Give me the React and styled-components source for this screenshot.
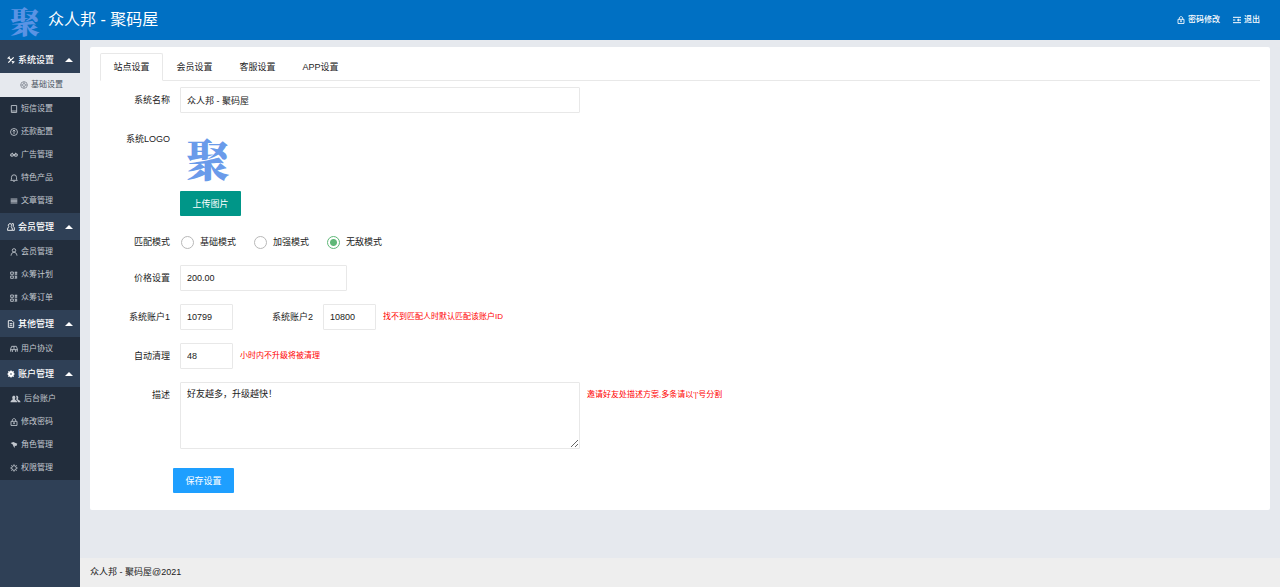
import React, { useState } from "react";
import styled, { createGlobalStyle, css } from "styled-components";

const GlobalStyle = createGlobalStyle`
  *, *::before, *::after { box-sizing: border-box; }
  body {
    margin: 0;
    background: #e6e9ee;
    color: #222;
    font-family: "Liberation Sans", "Noto Sans CJK SC", sans-serif;
    font-size: 9px;
    line-height: 14px;
  }
  input, textarea, button { font: inherit; color: inherit; }
  ul { margin: 0; padding: 0; list-style: none; }
  a { color: inherit; text-decoration: none; }
`;

const Page = styled.div`
  min-height: 100vh;
  display: grid;
  grid-template: 40px 1fr / 80px minmax(0, 1fr);
`;

const Header = styled.header`
  grid-column: 1 / -1;
  display: flex;
  align-items: center;
  justify-content: space-between;
  padding: 0 20px 0 10px;
  background: #0070c3;
  color: #fff;
`;

const Brand = styled.a`
  display: flex;
  align-items: center;
  gap: 8px;
`;

const BrandName = styled.h1`
  margin: 0;
  font-size: 16px;
  font-weight: 400;
  line-height: 24px;
`;

const Mark = styled.span`
  display: block;
  color: ${(p) => (p.$large ? "#6a9bea" : "#5a93e4")};
  font-family: "Noto Serif CJK SC", "Noto Sans CJK SC", serif;
  font-size: ${(p) => (p.$large ? 44 : 30)}px;
  line-height: ${(p) => (p.$large ? 52 : 40)}px;
  font-weight: 900;
`;

const TopLinks = styled.nav`
  display: flex;
  gap: 13px;
  font-size: 8px;
  font-weight: 500;
`;

const IconLink = styled.a`
  display: flex;
  align-items: center;
  gap: 3px;
`;

const Icon = styled.svg`
  flex: none;
  width: ${(p) => p.$w || 8}px;
  height: 8px;
  fill: none;
  stroke: currentColor;
  stroke-width: 1.3;
`;

const Sidebar = styled.nav`
  padding-top: 6px;
  background: #2f4056;
  color: #fff;
`;

const GroupHead = styled.button`
  display: flex;
  align-items: center;
  gap: 3px;
  width: 100%;
  height: 27px;
  padding: 0 7px;
  border: 0;
  background: none;
  color: #fff;
  font-weight: 500;
  text-align: left;
`;

const Caret = styled.span`
  margin-left: auto;
  border: 4px solid transparent;
  border-top-width: 0;
  border-bottom-color: #fff;
`;

const SubList = styled.ul`
  background: #222d3c;
  &:not(:has(li:only-child)) {
    padding-bottom: 1px;
  }
`;

const SubLink = styled.a`
  display: flex;
  align-items: center;
  gap: 3px;
  height: 23px;
  padding-left: 10px;
  color: #c3c8cf;
  font-size: 8px;
  ${(p) =>
    p.$active &&
    css`
      height: 24px;
      padding-left: 20px;
      background: #e6e9ee;
      color: #4a5361;
      svg {
        color: #858b95;
      }
    `}
`;

const Main = styled.div`
  display: flex;
  flex-direction: column;
`;

const Card = styled.main`
  margin: 7px 10px 20px;
  padding: 6px 10px 17px;
  border-radius: 2px;
  background: #fff;
`;

const Tabs = styled.div`
  display: flex;
  height: 28px;
  margin-bottom: 6px;
  border-bottom: 1px solid #e8e8e8;
`;

const Tab = styled.button`
  width: 63px;
  height: 28px;
  padding: 0;
  border: 1px solid transparent;
  border-radius: 2px 2px 0 0;
  background: none;
  white-space: nowrap;
  ${(p) =>
    p.$active &&
    css`
      border-color: #e8e8e8 #e8e8e8 #fff;
      background: #fff;
    `}
`;

const Row = styled.div`
  display: flex;
  align-items: flex-start;
  margin-bottom: ${(p) => (p.$tight ? 10 : 13)}px;
`;

const labelStyle = css`
  flex: none;
  width: 70px;
  margin-right: 10px;
  line-height: 26px;
  text-align: right;
`;

const Label = styled.label`
  ${labelStyle}
  ${(p) =>
    p.$second &&
    css`
      margin-left: 10px;
    `}
`;

const Caption = styled.span`
  ${labelStyle}
`;

const widths = { short: "53px", medium: "167px", long: "400px" };

const Input = styled.input`
  width: ${(p) => widths[p.$size]};
  height: 26px;
  padding: 0 6px;
  border: 1px solid #e8e8e8;
  border-radius: 1px;
  background: #fff;
`;

const TextArea = styled.textarea`
  width: ${widths.long};
  height: 67px;
  padding: 4px 6px;
  border: 1px solid #e8e8e8;
  border-radius: 1px;
  background: #fff;
  resize: vertical;
`;

const Hint = styled.span`
  margin-left: 7px;
  color: #f00;
  font-size: 8px;
  line-height: 26px;
`;

const Upload = styled.div`
  display: flex;
  flex-direction: column;
  align-items: flex-start;
  gap: 7px;
  padding-top: 6px;
`;

const Preview = styled.div`
  padding: 0 6px;
`;

const Button = styled.button`
  width: 61px;
  height: 25px;
  padding: 0;
  border: 0;
  border-radius: 1px;
  background: ${(p) => (p.$primary ? "#1e9fff" : "#009688")};
  color: #fff;
`;

const Radios = styled.div`
  display: flex;
  gap: 18px;
  padding-left: 1px;
`;

const RadioLabel = styled.label`
  display: flex;
  align-items: center;
  gap: 6px;
  height: 26px;
`;

const Radio = styled.input`
  appearance: none;
  width: 13px;
  height: 13px;
  margin: 0;
  border: 1px solid #b8b8b8;
  border-radius: 50%;
  &:checked {
    border-color: #5fb878;
    background: radial-gradient(circle, #5fb878 3px, #fff 4px);
  }
`;

const Actions = styled.div`
  padding: 6px 0 0 73px;
`;

const Footer = styled.footer`
  margin-top: auto;
  height: 29px;
  padding: 0 10px;
  background: #eee;
  line-height: 29px;
`;

const drawings = {
  tools: <path d="M2 2l8 8M10 2L2 10M1 4l3-3M8 11l3-3" strokeWidth="1.8" />,
  target: (
    <>
      <circle cx="6" cy="6" r="5" />
      <circle cx="6" cy="6" r="2.2" />
      <path d="M6 1v2.500M6 8.500v2.500M1 6h2.500M8.500 6h2.500" />
    </>
  ),
  phone: <path d="M2 .8h8v10.400H2zM2 9h8" />,
  coin: (
    <>
      <circle cx="6" cy="6" r="5.200" />
      <path d="M6 3v6M4 5l2-2 2 2" />
    </>
  ),
  link: (
    <path d="M6 6C4.500 3.500 1 3.500 1 6s3.500 2 5 0 5-2.500 5 0-3.500 2.500-5 0zM3 4l1-1M9 4L8 3" strokeWidth="1.600" />
  ),
  bell: <path d="M1 9.500h10L9.800 8V5a3.800 3.800 0 0 0-7.600 0v3zM5 11.200h2" />,
  lines: <path d="M1 3h10M1 5h10M1 7h10M1 9h10" />,
  members: (
    <path d="M4.500 1a2.500 2.500 0 0 1 1.500 4.500C7.500 6.500 8 8 8 11H.8c0-3 .6-4.500 2.200-5.500A2.500 2.500 0 0 1 4.500 1zM7 1h2.500v4.500L11 7v4H8" />
  ),
  user: (
    <>
      <circle cx="6" cy="3.600" r="2.600" />
      <path d="M1.500 11.500C2 8 4 6.200 6 6.200S10 8 10.500 11.500" />
    </>
  ),
  grid: <path d="M1 1.500h4v3.500H1zM1 7.500h4V11H1zM7 7.500h1.500V11H7M10 7v4.500M7 2h4M7 4.500h4M9 1v5" />,
  doc: <path d="M2 1h5.500L10 3.500V11H2zM4 5.500h4M4 8h4" />,
  car: <path d="M1 10V6l1.500-4h7L11 6v4M1 7h10M3.500 7v3.500M8.500 7v3.500M6 2v5" />,
  gearSolid: (
    <>
      <circle cx="6" cy="6" r="3" strokeWidth="3" />
      <path d="M6 .5v11M.5 6h11M2 2l8 8M10 2l-8 8" strokeWidth="1.500" />
      <circle cx="6" cy="6" r="1.200" fill="#2f4056" stroke="none" />
    </>
  ),
  people: (
    <path
      d="M5 1c3 0 2.500 4 1.300 5 0 1.500 3.700 1.500 3.700 5H0c0-3.500 3.500-3.500 3.500-5C2.200 5 2 1 5 1zM9 1c3.500 0 3 4 1.800 5 .2 1.500 4.200 1.500 4.200 5h-4c0-2-1-3.500-2.500-4C9.500 5 9.300 3 8 1.300z"
      fill="currentColor"
      stroke="none"
    />
  ),
  lock: <path d="M1.500 5h9v6.200h-9zM3.500 5V3.200c0-3 5-3 5 0V5M6 7v2.200M4.500 7.500h3" />,
  badge: <path d="M1 3l4-1.500L11 4 9.500 7.500 7 7l.5 3.500L5 8 4.500 5.500z" fill="currentColor" stroke="none" />,
  gear: (
    <>
      <circle cx="6" cy="6" r="3.500" />
      <path d="M6 .5v2M6 9.500v2M.5 6h2M9.500 6h2M2 2l1.500 1.500M8.500 8.500L10 10M10 2L8.500 3.500M3.500 8.500L2 10" />
    </>
  ),
  exit: <path d="M0 2h12M0 10h12M0 6h3.500M6 6h6M8 4v4" strokeWidth="1.500" />,
};

function Glyph({ name }) {
  const wide = name === "people";
  return (
    <Icon viewBox={wide ? "0 0 15 12" : "0 0 12 12"} $w={wide ? 11 : 8} aria-hidden="true">
      {drawings[name]}
    </Icon>
  );
}

const menu = [
  {
    title: "系统设置",
    icon: "tools",
    items: [
      ["基础设置", "target"],
      ["短信设置", "phone"],
      ["还款配置", "coin"],
      ["广告管理", "link"],
      ["特色产品", "bell"],
      ["文章管理", "lines"],
    ],
  },
  {
    title: "会员管理",
    icon: "members",
    items: [
      ["会员管理", "user"],
      ["众筹计划", "grid"],
      ["众筹订单", "grid"],
    ],
  },
  { title: "其他管理", icon: "doc", items: [["用户协议", "car"]] },
  {
    title: "账户管理",
    icon: "gearSolid",
    items: [
      ["后台账户", "people"],
      ["修改密码", "lock"],
      ["角色管理", "badge"],
      ["权限管理", "gear"],
    ],
  },
];

const tabs = ["站点设置", "会员设置", "客服设置", "APP设置"];
const modes = ["基础模式", "加强模式", "无敌模式"];

export default function App() {
  const [tab, setTab] = useState(tabs[0]);
  const [page, setPage] = useState("基础设置");

  return (
    <>
      <GlobalStyle />
      <Page lang="zh-CN">
        <Header>
          <Brand href="#">
            <Mark>聚</Mark>
            <BrandName>众人邦 - 聚码屋</BrandName>
          </Brand>
          <TopLinks>
            <IconLink href="#password">
              <Glyph name="lock" />
              密码修改
            </IconLink>
            <IconLink href="#logout">
              <Glyph name="exit" />
              退出
            </IconLink>
          </TopLinks>
        </Header>

        <Sidebar>
          {menu.map((group) => (
            <div key={group.title}>
              <GroupHead type="button" aria-expanded="true">
                <Glyph name={group.icon} />
                {group.title}
                <Caret />
              </GroupHead>
              <SubList>
                {group.items.map(([name, icon]) => (
                  <li key={name}>
                    <SubLink href="#" $active={page === name} onClick={() => setPage(name)}>
                      <Glyph name={icon} />
                      {name}
                    </SubLink>
                  </li>
                ))}
              </SubList>
            </div>
          ))}
        </Sidebar>

        <Main>
          <Card>
            <Tabs role="tablist">
              {tabs.map((name) => (
                <Tab
                  key={name}
                  type="button"
                  role="tab"
                  aria-selected={tab === name}
                  $active={tab === name}
                  onClick={() => setTab(name)}
                >
                  {name}
                </Tab>
              ))}
            </Tabs>
            <form onSubmit={(e) => e.preventDefault()}>
              <Row>
                <Label htmlFor="name">系统名称</Label>
                <Input id="name" $size="long" defaultValue="众人邦 - 聚码屋" />
              </Row>
              <Row>
                <Caption>系统LOGO</Caption>
                <Upload>
                  <Preview>
                    <Mark $large>聚</Mark>
                  </Preview>
                  <Button type="button">上传图片</Button>
                </Upload>
              </Row>
              <Row $tight role="radiogroup" aria-labelledby="mode-label">
                <Caption id="mode-label">匹配模式</Caption>
                <Radios>
                  {modes.map((name, i) => (
                    <RadioLabel key={name}>
                      <Radio type="radio" name="mode" defaultChecked={i === 2} />
                      {name}
                    </RadioLabel>
                  ))}
                </Radios>
              </Row>
              <Row>
                <Label htmlFor="price">价格设置</Label>
                <Input id="price" $size="medium" defaultValue="200.00" />
              </Row>
              <Row>
                <Label htmlFor="account1">系统账户1</Label>
                <Input id="account1" $size="short" defaultValue="10799" />
                <Label htmlFor="account2" $second>
                  系统账户2
                </Label>
                <Input id="account2" $size="short" defaultValue="10800" />
                <Hint>找不到匹配人时默认匹配该账户ID</Hint>
              </Row>
              <Row>
                <Label htmlFor="clean">自动清理</Label>
                <Input id="clean" $size="short" defaultValue="48" />
                <Hint>小时内不升级将被清理</Hint>
              </Row>
              <Row>
                <Label htmlFor="description">描述</Label>
                <TextArea id="description" defaultValue="好友越多，升级越快！" />
                <Hint>邀请好友处描述方案,多条请以'|'号分割</Hint>
              </Row>
              <Actions>
                <Button type="submit" $primary>
                  保存设置
                </Button>
              </Actions>
            </form>
          </Card>
          <Footer>众人邦 - 聚码屋@2021</Footer>
        </Main>
      </Page>
    </>
  );
}
